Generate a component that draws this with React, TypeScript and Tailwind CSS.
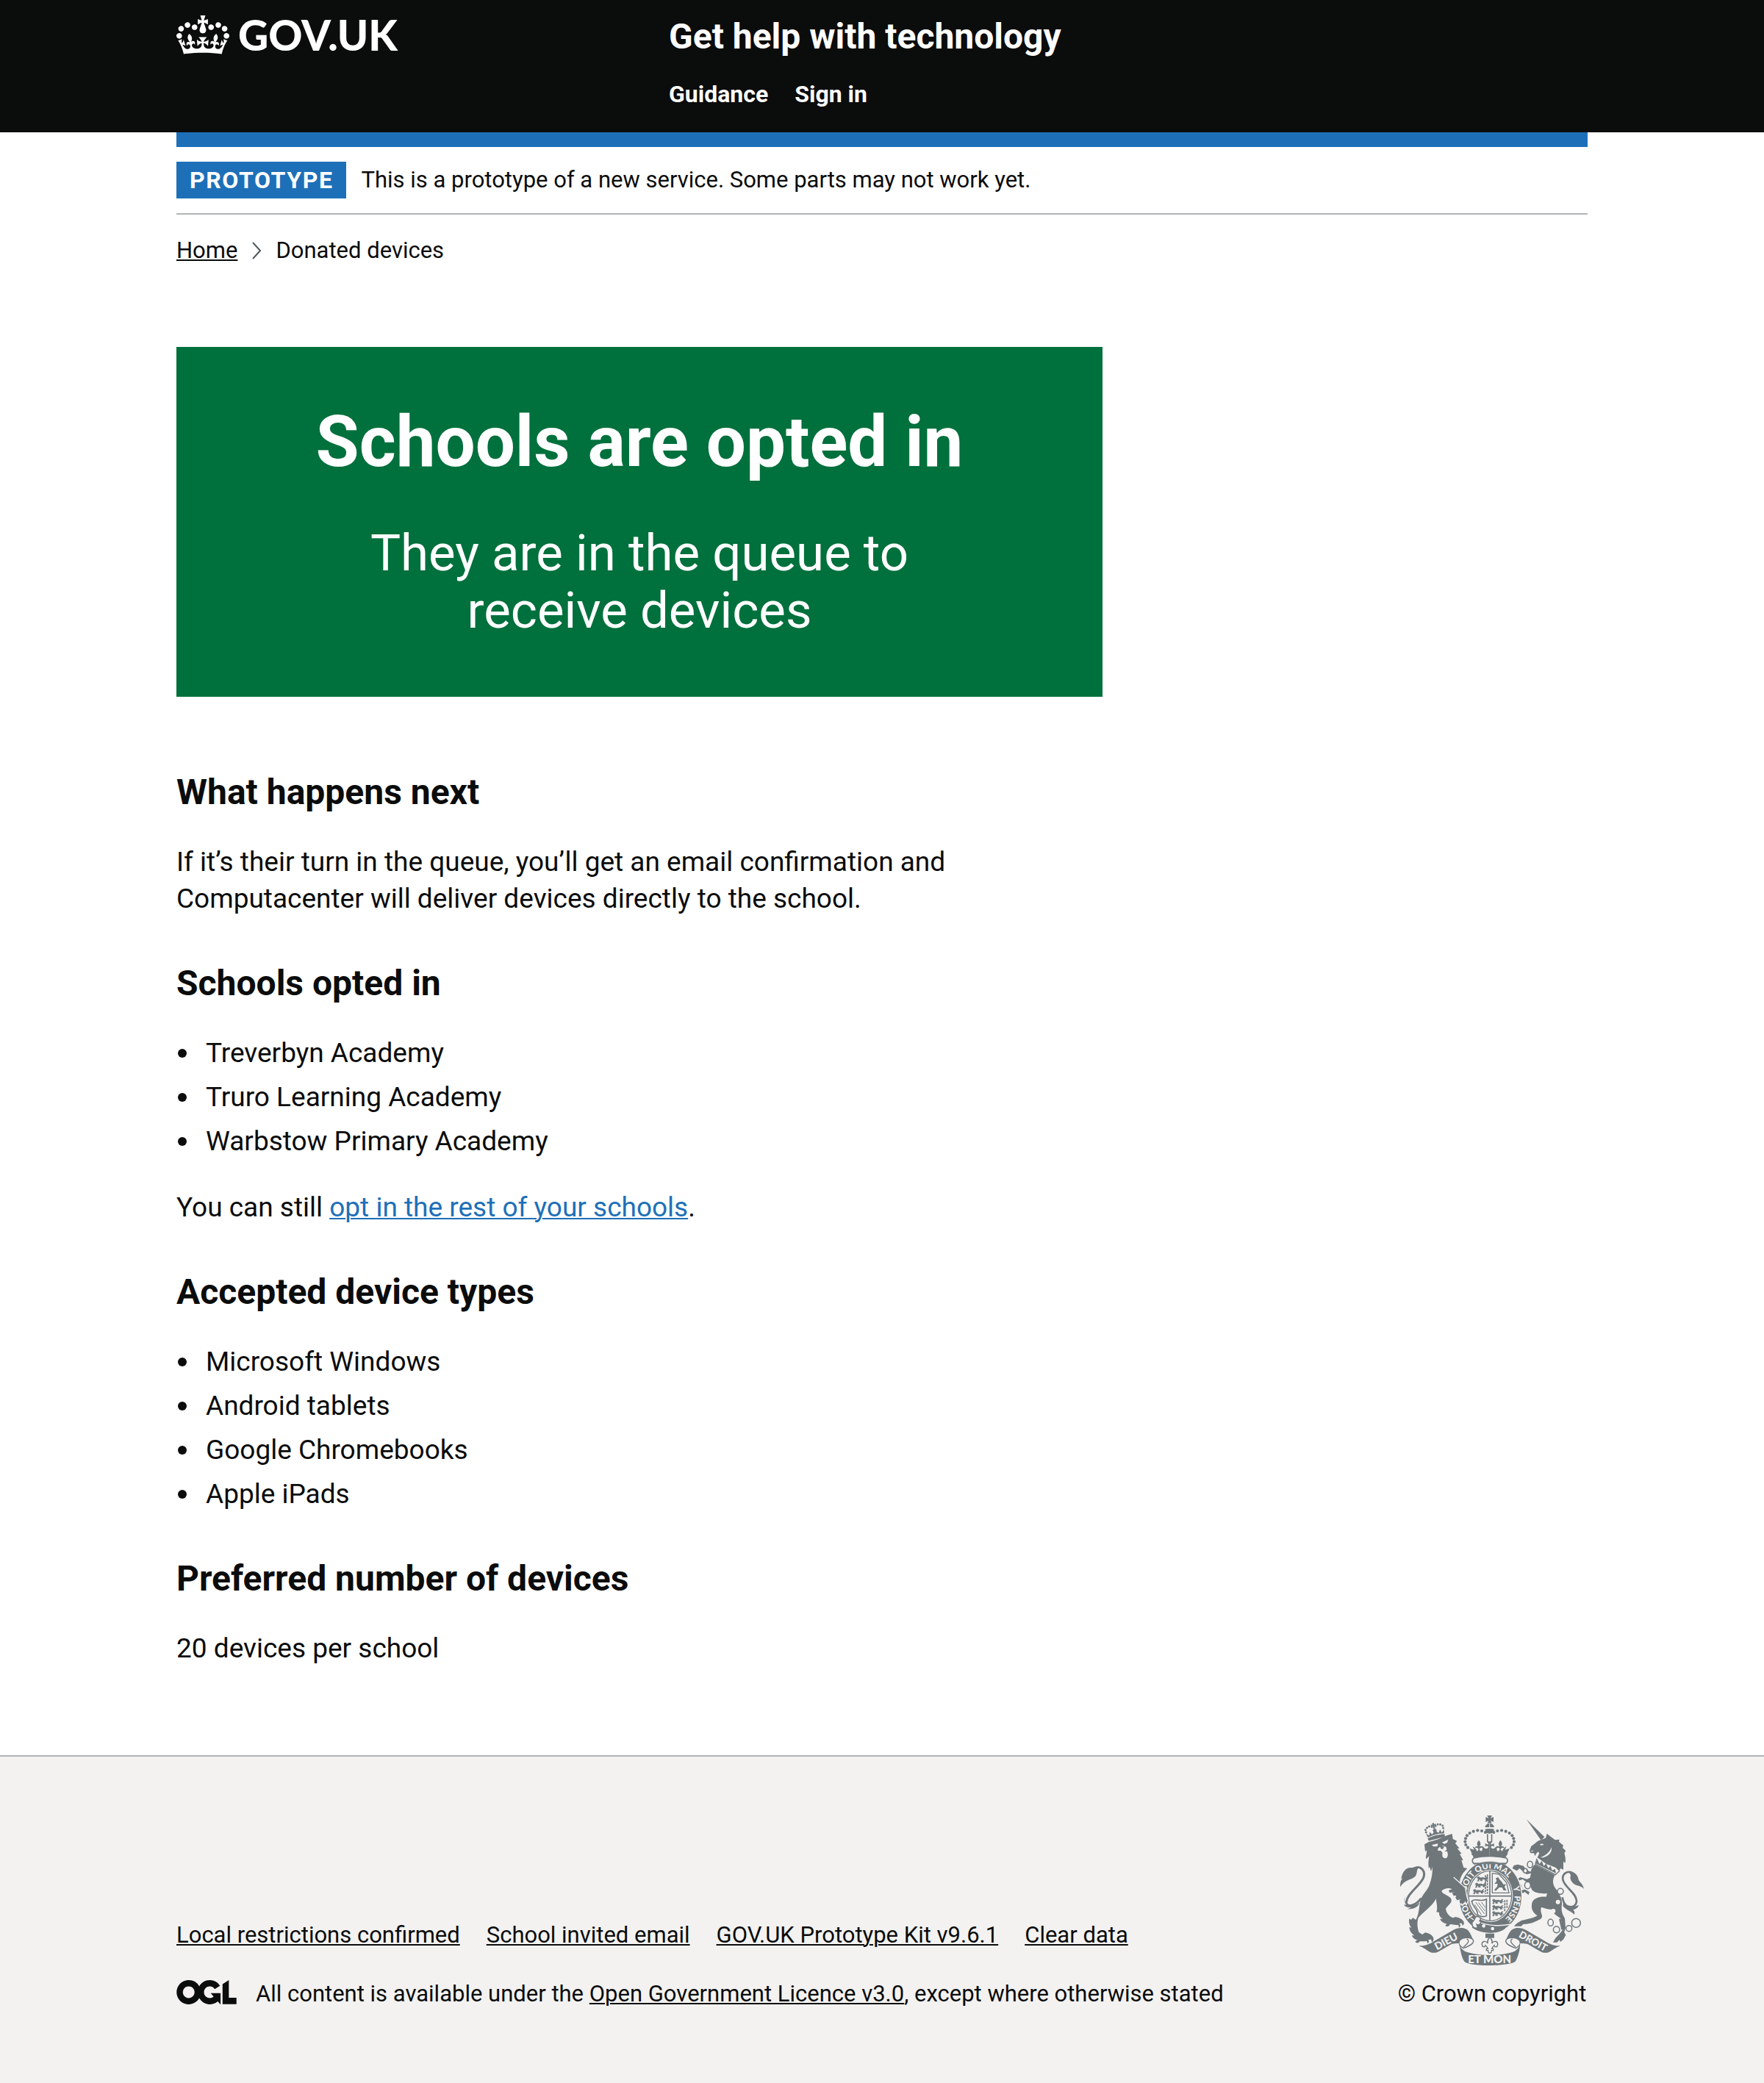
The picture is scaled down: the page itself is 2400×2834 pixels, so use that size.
import React from "react";

const INK = "#6f777b";
const PAPER = "#f3f2f1";

function Crown() {
  return (
    <svg
      aria-hidden="true"
      focusable="false"
      className="h-[53px] w-[72px] shrink-0"
      viewBox="0 0 132 97"
      fill="currentColor"
      fillRule="evenodd"
    >
      <path d="M25 30.2c3.5 1.5 7.7-.2 9.1-3.7 1.5-3.6-.2-7.8-3.9-9.2-3.6-1.4-7.6.3-9.1 3.9-1.4 3.5.3 7.5 3.9 9zM9 39.5c3.6 1.5 7.8-.2 9.2-3.7 1.5-3.6-.2-7.8-3.9-9.1-3.6-1.5-7.6.2-9.1 3.8-1.4 3.5.3 7.5 3.8 9zM4.4 57.2c3.5 1.5 7.7-.2 9.1-3.8 1.5-3.6-.2-7.7-3.9-9.1-3.5-1.5-7.6.3-9.1 3.8-1.4 3.5.3 7.6 3.9 9.1zm38.3-21.4c3.5 1.5 7.7-.2 9.1-3.8 1.5-3.6-.2-7.7-3.9-9.1-3.6-1.5-7.6.3-9.1 3.8-1.3 3.6.4 7.7 3.9 9.1zm64.4-5.6c-3.6 1.5-7.8-.2-9.1-3.7-1.5-3.6.2-7.8 3.8-9.2 3.6-1.4 7.7.3 9.2 3.9 1.3 3.5-.4 7.5-3.9 9zm15.9 9.3c-3.6 1.5-7.7-.2-9.1-3.7-1.5-3.6.2-7.8 3.7-9.1 3.6-1.5 7.7.2 9.2 3.8 1.5 3.5-.3 7.5-3.8 9zm4.7 17.7c-3.6 1.5-7.8-.2-9.2-3.8-1.5-3.6.2-7.7 3.9-9.1 3.6-1.5 7.7.3 9.2 3.8 1.3 3.5-.4 7.6-3.9 9.1zM89.3 35.8c-3.6 1.5-7.8-.2-9.2-3.8-1.4-3.6.2-7.7 3.9-9.1 3.6-1.5 7.7.3 9.2 3.8 1.4 3.6-.3 7.7-3.9 9.1zM69.7 17.7l8.9 4.7V9.3l-8.9 2.8c-.2-.3-.5-.6-.9-.9L72.4 0H59.6l3.5 11.2c-.3.3-.6.5-.9.9l-8.8-2.8v13.1l8.8-4.7c.3.3.6.7.9.9l-5 15.4v.1c-.2.8-.4 1.6-.4 2.4 0 4.1 3.1 7.5 7 8.1h.2c.3 0 .7.1 1 .1.4 0 .7 0 1-.1h.2c4-.6 7.1-4.1 7.1-8.1 0-.8-.1-1.7-.4-2.4V34l-5.1-15.4c.4-.2.7-.6 1-.9zM66 92.8c16.9 0 32.8 1.1 47.1 3.2 4-16.9 8.9-26.7 14-33.5l-9.6-3.4c1 4.9 1.1 7.2 0 10.2-1.5-1.4-3-4.3-4.2-8.7L108.6 76c2.8-2 5-3.2 7.5-3.3-4.4 9.4-10 11.9-13.6 11.2-4.3-.8-6.3-4.6-5.6-7.9 1-4.7 5.7-5.9 8-.5 4.3-8.7-3-11.4-7.6-8.8 7.1-7.2 7.9-13.5 2.1-21.1-8 6.1-8.1 12.3-4.5 20.8-4.7-5.4-12.1-2.5-9.5 6.2 3.4-5.2 7.9-2 7.2 3.1-.6 4.3-6.4 7.8-13.5 7.2-10.3-.9-10.9-8-11.2-13.8 2.5-.5 7.1 1.8 11 7.3L80.2 60c-4.1 4.4-8 5.3-12.3 5.4 1.4-4.4 8-11.6 8-11.6H55.5s6.4 7.2 7.9 11.6c-4.2-.1-8-1-12.3-5.4l1.4 16.4c3.9-5.5 8.5-7.7 10.9-7.3-.3 5.8-.9 12.8-11.1 13.8-7.2.6-12.9-2.9-13.5-7.2-.7-5 3.8-8.3 7.1-3.1 2.7-8.7-4.6-11.6-9.4-6.2 3.7-8.5 3.6-14.7-4.6-20.8-5.8 7.6-5 13.9 2.2 21.1-4.7-2.6-11.9.1-7.7 8.8 2.3-5.5 7.1-4.2 8.1.5.7 3.3-1.3 7.1-5.7 7.9-3.5.7-9-1.8-13.5-11.2 2.5.1 4.7 1.3 7.5 3.3l-4.7-15.4c-1.2 4.4-2.7 7.2-4.3 8.7-1.1-3-.9-5.3 0-10.2l-9.5 3.4c5 6.9 9.9 16.7 14 33.5 14.8-2.1 30.8-3.2 47.7-3.2z" />
    </svg>
  );
}

function OglLogo() {
  return (
    <svg
      role="img"
      aria-label="OGL"
      className="h-[33px] w-[82px] shrink-0"
      viewBox="0 0 483.2 195.7"
      fill="currentColor"
    >
      <path d="M421.5 142.8V.1l-50.7 32.3v161.1h112.4v-50.7zm-122.3-9.6A47.12 47.12 0 0 1 221 97.8c0-26 21.1-47.1 47.1-47.1 16.7 0 31.4 8.7 39.7 21.8l42.7-27.2A97.63 97.63 0 0 0 268.1 0c-36.5 0-68.3 20.1-85.1 49.7A98 98 0 0 0 97.8 0C43.9 0 0 43.9 0 97.8s43.9 97.8 97.8 97.8c36.5 0 68.3-20.1 85.1-49.7a97.76 97.76 0 0 0 149.6 25.4l19.4 22.2h3v-87.8h-80l24.3 27.5zM97.8 145c-26 0-47.1-21.1-47.1-47.1s21.1-47.1 47.1-47.1 47.1 21.1 47.1 47.1S123.8 145 97.8 145" />
    </svg>
  );
}

/* One half of the St Edward's crown; drawn again, flipped, for the other half. */
function CrownHalf() {
  const beads = [
    [420, 159], [405, 153], [388, 151], [371, 155], [356, 162],
    [345, 172], [339, 184], [337, 197], [340, 210], [348, 221],
  ];
  return (
    <g>
      {beads.map(([x, y]) => (
        <circle key={x} cx={x} cy={y} r="6.2" />
      ))}
      <path d="M437 236C412 236 385 240 366 248L355 224L374 230L368 216C378 222 384 230 385 236C392 232 393 228 390 224C385 220 380 224 377 222C379 216 385 213 390 217C383 206 386 200 393 191C400 200 403 206 396 217C402 213 408 216 410 222C406 225 401 220 397 224C394 229 397 234 404 236C408 232 409 226 406 214L418 224C424 228 430 224 432 218C428 212 422 216 419 218V203C424 206 428 209 433 208L426 196H437Z" />
      <path d="M437 234C408 234 380 239 362 246C367 252 371 258 372 264C392 259 415 257 437 257Z" />
      <path d="M426 166h5v32h-5z" />
    </g>
  );
}

function ShieldLion() {
  return (
    <path
      d="M0 5L7 1L13 6L25 5L33 8L38 3L44 2L40 8L46 13L38 12L40 18H33L30 12L20 13L22 19H14L12 13L6 15L8 20H1L4 12Z"
      fill={INK}
      stroke={INK}
      strokeWidth="1.5"
    />
  );
}

function RibbonHalf() {
  return (
    <g>
      <path d="M147 621C172 624 190 616 212 602L288 558C305 548 328 545 344 555C358 565 362 582 371 600C366 590 345 585 330 592C318 597 313 606 315 612C302 612 290 612 280 616L230 645C218 652 205 652 193 647C180 640 170 630 147 621Z" fill={INK} />
      <path d="M371 603C371 616 350 624 330 632C318 626 308 614 314 602C322 590 347 585 362 592C371 596 371 600 371 603Z" fill={PAPER} stroke={INK} strokeWidth="4" />
      <path d="M344 593C360 605 342 616 330 627" fill="none" stroke={INK} strokeWidth="4" />
    </g>
  );
}

function Crest() {
  return (
    <svg aria-hidden="true" className="h-[204px] w-[250px]" viewBox="72 90 750 612">
      <defs>
        <path id="garter" d="M440 535A99 114 0 0 1 440 307A99 114 0 0 1 440 535" />
      </defs>

      {/* lion's tail */}
      <path d="M128 306C158 292 178 318 166 346C150 380 100 408 97 446C100 466 134 460 158 428" fill="none" stroke={INK} strokeWidth="9" />
      <path d="M72 382C72 362 76 350 84 346L76 348C80 330 88 308 108 304C124 301 142 304 152 300C136 308 144 326 134 338C118 354 88 352 72 382Z" fill={INK} />
      <path d="M93 418C86 434 88 448 100 456C112 462 136 458 152 444C148 462 128 474 100 472C108 470 114 468 116 466C100 466 90 462 88 454L98 456C90 446 88 432 93 418Z" fill={INK} />

      {/* lion */}
      <path
        d="M171 208L190 197C210 195 240 182 262 172L284 165L287 186L304 194L297 204L314 224L305 224L323 246L315 247L329 272L322 273L331 303L346 306L328 326C320 340 314 352 316 364L338 386C342 404 342 420 349 436L342 452L338 438L326 452L314 440L323 430L304 436L297 424L308 416L290 418L284 406L296 402L274 406L270 396L284 390C268 384 252 388 241 398C244 412 270 414 280 430C286 446 268 454 258 470C260 488 272 502 288 508L298 504C310 506 322 510 329 520C334 526 334 536 326 540L324 530L312 530C320 534 320 542 312 548L310 538C300 538 286 534 276 534C272 542 264 546 256 540L262 532C250 530 240 524 234 512L246 512C234 506 230 496 231 486L220 484C226 468 220 446 218 430C204 460 166 484 146 508C140 526 142 548 148 566L162 576L174 568C188 570 200 576 206 586C211 594 208 602 202 608L198 596L186 597C192 602 190 608 184 612L180 602C170 604 160 604 152 604C148 612 138 612 133 606L142 598C130 596 122 588 120 580L130 580C118 572 110 560 109 546L118 548C108 538 106 520 110 510L116 516L124 508L136 516C150 488 148 466 154 440C160 414 184 396 192 372C202 346 204 322 204 300L198 318L192 300L188 306L187 282L190 256L178 268C174 258 182 246 180 232L174 238Z"
        fill={INK}
      />
      <path d="M201 210L226 205L224 216L208 217Z M243 200L268 188L264 201L252 206Z M226 226C238 212 250 212 260 220L262 230L252 238L264 236C268 250 268 262 256 265C245 264 242 254 245 243L238 234L226 234Z" fill={PAPER} />
      <path d="M234 216H252L246 228L238 226Z" fill={INK} />
      <path d="M184 196L254 170" stroke={PAPER} strokeWidth="3" />

      {/* lion's crown */}
      <g transform="rotate(-14 214 155)" fill={INK}>
        <path d="M180 186H248L250 176C228 170 200 170 178 176Z" />
        <path d="M180 172L176 156L188 166L192 152L200 164L208 158L206 148L214 144L222 148L220 158L228 164L236 152L240 166L252 156L248 172C226 166 202 166 180 172Z" />
        {[[178, 150], [178, 140], [186, 133], [196, 130], [206, 134], [222, 134], [232, 130], [242, 133], [250, 140], [250, 150]].map(([x, y]) => (
          <circle key={`${x}-${y}`} cx={x} cy={y} r="4.4" />
        ))}
        <path d="M210 120H218L217 127L224 124V133L217 131L218 144H210L211 131L204 133V124L211 127Z" />
      </g>

      {/* unicorn's tail */}
      <path d="M774 324C752 314 732 330 736 352C742 384 790 404 792 438C792 462 768 470 748 456C740 448 736 436 734 424" fill="none" stroke={INK} strokeWidth="8" />
      <path d="M760 318C780 318 796 330 799 348C801 362 816 364 822 390C812 378 802 378 790 374C774 368 762 350 768 334Z" fill={INK} />
      <path d="M738 440C748 464 776 466 802 456C796 468 786 474 778 474C784 482 786 488 782 494C772 482 752 478 736 460Z" fill={INK} />

      {/* unicorn */}
      <path d="M587 105L661 178L647 191Z" fill={INK} />
      <path d="M600 234L607 215L618 208L634 194L666 182L671 164L688 178L704 190L722 188L720 197L738 212L735 222L748 234L742 244C746 256 748 270 746 284L738 278V312L728 306L720 316L706 302L668 288L632 262L640 244L634 238L626 248L622 256L618 244L604 244Z" fill={INK} />
      <path d="M690 220C692 242 678 256 656 262L644 262C664 254 680 244 690 220Z M642 208C650 204 656 206 658 210L646 212Z M604 236L616 232L612 238Z" fill={PAPER} />
      <path d="M630 266L624 288L706 332L724 314" fill="none" stroke={INK} strokeWidth="4" />
      <path d="M632 268L640 288L650 276L658 296L668 286L676 305L686 296L692 314L704 308L708 326L626 286Z" fill={INK} />
      <path
        d="M623 290L704 334C692 352 694 372 706 388C722 408 734 430 732 452C728 480 734 494 744 510L747 548L742 566L748 578L738 596L726 606L722 598L712 608H696L706 590L722 574L736 556L728 512C712 498 700 496 690 474C666 474 650 462 648 466C640 488 660 498 646 512C622 526 598 534 574 534L566 542H536L548 530L568 518C590 514 620 508 632 498C610 486 604 462 612 442C622 424 650 420 668 422L672 408C648 410 622 408 610 394L600 372L572 350L556 356L572 388L600 402L596 414L580 402L572 408L566 396L580 392C566 384 554 368 548 352L562 342L590 350L602 344L606 326L588 330L574 320L560 306L548 316L530 306L536 294L552 290L576 296L584 310L604 320C608 308 612 296 623 290Z"
        fill={INK}
      />
      <path d="M724 512L734 556" stroke={INK} strokeWidth="8" />

      {/* chain */}
      <g fill={PAPER} stroke={INK} strokeWidth="4.5">
        <ellipse cx="602" cy="290" rx="11" ry="13" />
        <ellipse cx="583" cy="316" rx="8" ry="9" />
        <ellipse cx="592" cy="375" rx="12" ry="14" />
        <circle cx="726" cy="400" r="12" />
        <ellipse cx="686" cy="527" rx="11" ry="14" />
        <circle cx="710" cy="556" r="13" />
        <circle cx="761" cy="551" r="12" />
        <circle cx="790" cy="529" r="18" />
      </g>
      <circle cx="716" cy="443" r="9" fill={PAPER} />
      <circle cx="697" cy="480" r="9" fill={PAPER} />

      {/* garter */}
      <ellipse cx="440" cy="421" rx="131" ry="151" fill={PAPER} />
      <ellipse cx="440" cy="421" rx="127" ry="147" fill={INK} />
      <ellipse cx="439" cy="418" rx="93" ry="107" fill={PAPER} />
      <ellipse cx="439" cy="418" rx="88" ry="102" fill={PAPER} stroke={INK} strokeWidth="4" />
      <g fill={PAPER} fontFamily="Lato, sans-serif" fontWeight="900" fontSize="34">
        <text><textPath href="#garter" startOffset="12%">HON</textPath></text>
        <text><textPath href="#garter" startOffset="28.5%">SOIT QUI MAL</textPath></text>
        <text><textPath href="#garter" startOffset="69%">Y</textPath></text>
        <text><textPath href="#garter" startOffset="74.5%">PENSE</textPath></text>
      </g>

      {/* lion's forepaw over the garter */}
      <path d="M290 342L338 385C342 404 342 420 349 436L342 452L338 438L326 452L314 440L323 430L304 436L296 400L280 370Z" fill={INK} />
      <path d="M290 342L338 385C342 404 342 420 350 438L342 456L338 444L326 458L312 446" fill="none" stroke={PAPER} strokeWidth="4" />

      {/* crown's cap and band */}
      <path d="M372 264C364 270 366 280 372 286H504C512 280 512 270 506 264C466 254 412 254 372 264Z" fill={PAPER} stroke={INK} strokeWidth="5" />
      <path d="M374 291C410 274 466 274 502 291L506 284H370Z" fill={INK} />
      <g fill={INK}>
        <CrownHalf />
        <g transform="translate(874 0) scale(-1 1)"><CrownHalf /></g>
        <path d="M427 90H447L441 101L453 96V117L441 111L446 121H428L433 111L421 117V96L433 101Z" />
        <path d="M418 138C420 128 428 122 437 122C446 122 454 128 456 138Z" />
        <path d="M419 148C419 142 455 142 455 148C455 158 448 164 437 164C426 164 419 158 419 148Z" />
      </g>
      <path d="M437 124V138M420 143H454" stroke={PAPER} strokeWidth="3" />

      {/* shield */}
      <path d="M438 316V518M351 419H527" stroke={INK} strokeWidth="5" />
      <g transform="translate(386 338)"><ShieldLion /></g>
      <g transform="translate(378 364)"><ShieldLion /></g>
      <g transform="translate(370 390)"><ShieldLion /></g>
      <g transform="translate(448 430)"><ShieldLion /></g>
      <g transform="translate(448 455)"><ShieldLion /></g>
      <g transform="translate(448 480)"><ShieldLion /></g>
      <path d="M499 436V484M508 434V470M420 334V410M428 330V410" stroke={INK} strokeWidth="5" strokeDasharray="9 3" />
      <path d="M448 326L476 330L506 364L516 406H448Z" fill="none" stroke={INK} strokeWidth="4" />
      <path d="M462 346L472 342L478 352L486 360L494 372L504 370L498 382L506 396H494L488 384L476 384L462 398L456 394L468 380L470 368L456 370L466 358Z" fill={INK} />
      <path d="M364 440C380 424 396 446 424 432V500C408 506 392 502 388 494C390 470 368 466 364 440Z" fill="none" stroke={INK} strokeWidth="5" />
      <path d="M380 444L416 492M392 446L418 480M376 454L404 496M404 444L420 466" stroke={INK} strokeWidth="3" />

      {/* garter strap and buckle */}
      <path d="M366 516C400 540 460 552 505 540L500 552C470 578 400 572 366 548Z" fill={INK} />
      <path d="M360 508C392 532 452 548 524 534" fill="none" stroke={PAPER} strokeWidth="4" />
      <circle cx="413" cy="541" r="7" fill={PAPER} />
      <circle cx="449" cy="552" r="7" fill={PAPER} />
      <path d="M380 504C396 500 406 512 396 520C408 528 394 540 384 534L388 548C376 552 366 546 366 534C362 524 374 520 376 514Z" fill={PAPER} stroke={INK} strokeWidth="4" />

      {/* fleur-de-lis pendant */}
      <path d="M420 572H456V590H420Z" fill={INK} />
      <path d="M438 586C430 596 426 602 430 612C420 598 404 604 406 618C408 628 418 630 420 620C424 624 428 628 430 634H424V641H431C430 648 434 652 438 652C442 652 446 648 445 641H452V634H446C448 628 452 624 456 620C458 630 468 628 470 618C472 604 456 598 446 612C450 602 446 596 438 586Z" fill={PAPER} stroke={INK} strokeWidth="4" />

      {/* motto ribbon */}
      <RibbonHalf />
      <g transform="translate(874 0) scale(-1 1)"><RibbonHalf /></g>
      <path d="M313 614C318 630 328 642 345 648C400 664 474 664 530 648C548 642 556 630 561 614C562 640 552 670 542 686C520 706 354 708 334 686C322 668 318 640 313 614Z" fill={INK} />
      <g fill={PAPER} fontFamily="Lato, sans-serif" fontWeight="900" textAnchor="middle">
        <text fontSize="42" transform="translate(266 617) rotate(-28)">DIEU</text>
        <text fontSize="45" x="437" y="693">ET MON</text>
        <text fontSize="40" transform="translate(608 615) rotate(29)">DROIT</text>
      </g>
    </svg>
  );
}

const underlined = "underline decoration-2 underline-offset-2";

function Heading({ children }: { children: React.ReactNode }) {
  return <h2 className="mb-10 pt-5 text-[48px] leading-[60px] font-bold">{children}</h2>;
}

function Paragraph({ children }: { children: React.ReactNode }) {
  return <p className="mb-10 text-[37px] leading-[50px]">{children}</p>;
}

function BulletList({ items }: { items: string[] }) {
  return (
    <ul className="mb-10 flex flex-col gap-2.5 text-[37px] leading-[50px]">
      {items.map((item) => (
        <li key={item} className="flex items-center before:mr-[26px] before:ml-0.5 before:size-3 before:rounded-full before:bg-current">
          {item}
        </li>
      ))}
    </ul>
  );
}

const footerLinks = [
  "Local restrictions confirmed",
  "School invited email",
  "GOV.UK Prototype Kit v9.6.1",
  "Clear data",
];

export default function App() {
  return (
    <div className="bg-white font-[Roboto,Arial,sans-serif] text-[#0b0c0c]">
      <header className="bg-[#0b0c0c] text-white">
        <div className="mx-auto flex w-4/5 max-w-[1920px] pt-5 pb-8">
          <div className="w-1/3">
            <a href="#" className="inline-flex items-center gap-3 font-[Lato,sans-serif] text-[57px] leading-[54px] font-black">
              <Crown />
              GOV.UK
            </a>
          </div>
          <div className="w-2/3 pl-[30px]">
            <a href="#" className="block text-[48px] leading-[60px] font-bold">Get help with technology</a>
            <nav className="mt-7 flex gap-9 text-[32px] leading-10 font-bold">
              <a href="#">Guidance</a>
              <a href="#">Sign in</a>
            </nav>
          </div>
        </div>
      </header>

      <div className="mx-auto w-4/5 max-w-[1920px]">
        <div className="flex items-center gap-5 border-t-20 border-b-2 border-t-[#1d70b8] border-b-[#b1b4b6] py-5 text-[31px] leading-[50px]">
          <strong className="bg-[#1d70b8] px-[18px] text-[32px] font-bold tracking-wider text-white">PROTOTYPE</strong>
          <span>This is a prototype of a new service. Some parts may not work yet.</span>
        </div>

        <nav aria-label="Breadcrumb" className="mt-[30px] text-[31px] leading-[38px]">
          <ol className="flex items-center">
            <li><a href="#" className={underlined}>Home</a></li>
            <li className="flex items-center">
              <svg aria-hidden="true" className="mx-5 h-6 w-3" viewBox="0 0 12 24" fill="none" stroke="#505a5f" strokeWidth="2">
                <path d="M1 1L11 12L1 23" />
              </svg>
              <span aria-current="page">Donated devices</span>
            </li>
          </ol>
        </nav>

        <main className="pt-28 pb-20">
          <div className="mb-20 w-[1260px] max-w-full bg-[#00703c] pt-20 pb-[78px] text-center text-white">
            <h1 className="mb-16 text-[96px] leading-[98px] font-bold">Schools are opted in</h1>
            <div className="mx-auto max-w-[900px] text-[69px] leading-[78px]">They are in the queue to receive devices</div>
          </div>

          <div className="w-[1260px] max-w-full">
            <Heading>What happens next</Heading>
            <div className="max-w-[1160px]">
              <Paragraph>
                If it’s their turn in the queue, you’ll get an email confirmation and Computacenter will deliver devices directly to the school.
              </Paragraph>
            </div>

            <Heading>Schools opted in</Heading>
            <BulletList items={["Treverbyn Academy", "Truro Learning Academy", "Warbstow Primary Academy"]} />
            <Paragraph>
              You can still{" "}
              <a href="#" className="text-[#1d70b8] underline decoration-2 underline-offset-2">opt in the rest of your schools</a>.
            </Paragraph>

            <Heading>Accepted device types</Heading>
            <BulletList items={["Microsoft Windows", "Android tablets", "Google Chromebooks", "Apple iPads"]} />

            <Heading>Preferred number of devices</Heading>
            <Paragraph>20 devices per school</Paragraph>
          </div>
        </main>
      </div>

      <footer className="border-t-2 border-[#b1b4b6] bg-[#f3f2f1] pt-20 pb-[102px] text-[31px] leading-[38px]">
        <div className="mx-auto flex w-4/5 max-w-[1920px] items-end justify-between">
          <div>
            <ul className="mb-[42px] flex gap-9">
              {footerLinks.map((label) => (
                <li key={label}><a href="#" className={underlined}>{label}</a></li>
              ))}
            </ul>
            <div className="flex items-start gap-[26px]">
              <OglLogo />
              <span>
                All content is available under the{" "}
                <a href="#" className={underlined}>Open Government Licence v3.0</a>, except where otherwise stated
              </span>
            </div>
          </div>
          <a href="#" className="flex w-[260px] flex-col items-center gap-5 whitespace-nowrap">
            <Crest />
            © Crown copyright
          </a>
        </div>
      </footer>
    </div>
  );
}
